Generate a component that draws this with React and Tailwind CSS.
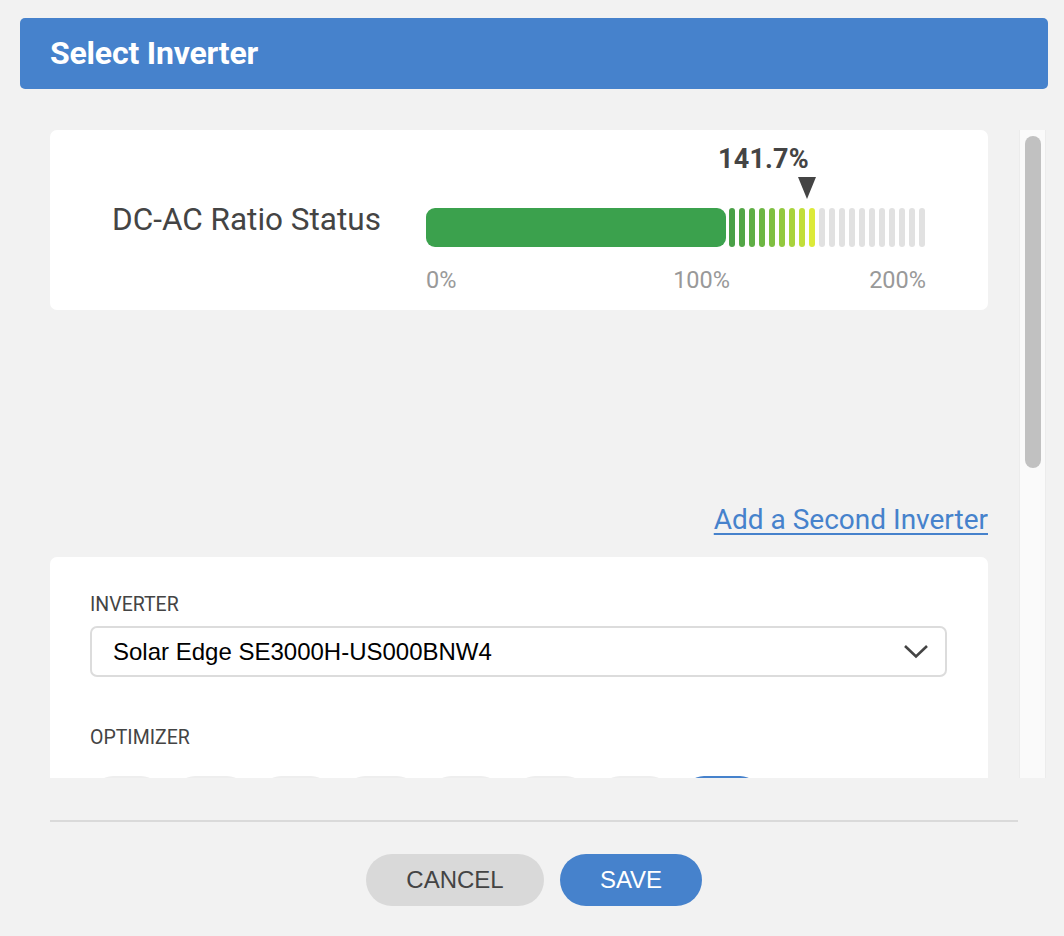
import React from "react";

const segColors = [
  "#49a047",
  "#52a646",
  "#5fae45",
  "#6db643",
  "#7fbf41",
  "#93c93e",
  "#a9d33c",
  "#c2de3a",
  "#dcea38",
];

const RatioBar = () => {
  const segments = [];
  for (let i = 0; i < 20; i++) {
    segments.push(
      <div
        key={i}
        className="w-[6px] h-full rounded-full"
        style={{ backgroundColor: i < segColors.length ? segColors[i] : "#e1e1e1" }}
      />
    );
  }
  return (
    <div className="w-[500px] pt-[13px]">
      <div className="ml-[292px] w-[100px] text-[27px] leading-[32px] font-bold text-[#444] tracking-[0.2px]">
        141.7%
      </div>
      <div className="ml-[372px] mt-[2px] w-0 h-0 border-l-[9px] border-r-[9px] border-t-[22px] border-l-transparent border-r-transparent border-t-[#444]" />
      <div className="flex items-stretch h-[39px] mt-[9px]">
        <div className="w-[300px] h-full rounded-[9px] bg-[#3ba14d]" />
        <div className="flex gap-[4px] ml-[3px] h-full">{segments}</div>
      </div>
      <div className="flex mt-[19px] text-[23.5px] leading-[28px] text-[#999]">
        <span className="w-[240px]">0%</span>
        <span className="w-[64px] text-right">100%</span>
        <span className="flex-1 text-right">200%</span>
      </div>
    </div>
  );
};

const optButtons = [68, 72, 70, 72, 70, 71, 70, 76];

export default function App() {
  return (
    <div
      className="w-full h-[936px] bg-[#f2f2f2] overflow-hidden pt-[18px]"
      style={{ fontFamily: "Roboto, 'Liberation Sans', sans-serif" }}
    >
      <div className="ml-[20px] mr-[16px] h-[71px] rounded-[5px] bg-[#4682cc] flex items-center pl-[30px] pb-[2px]">
        <h1 className="text-[32px] font-bold text-white tracking-[-0.2px]">Select Inverter</h1>
      </div>

      <div className="flex mt-[41px] ml-[50px] h-[648px]">
        <div className="w-[938px] h-full overflow-hidden">
          <div className="bg-white rounded-[7px] h-[180px] flex pl-[62px]">
            <div className="w-[314px] pt-[71px] text-[31.5px] leading-[38px] text-[#444]">
              DC-AC Ratio Status
            </div>
            <RatioBar />
          </div>

          <div className="flex justify-end mt-[193px] h-[54px]">
            <a href="#" className="text-[28px] leading-[34px] text-[#4682cc] underline underline-offset-[4px] decoration-[1.5px]">
              Add a Second Inverter
            </a>
          </div>

          <div className="bg-white rounded-[7px] px-[40px] pt-[36px] pb-[40px]">
            <div className="text-[19.5px] leading-[24px] text-[#444]">INVERTER</div>
            <div className="mt-[9px] w-[857px] h-[51px] border-2 border-[#dcdcdc] rounded-[7px] flex items-center justify-between pl-[21px] pr-[16px]">
              <span
                className="text-[24px] text-black"
                style={{ fontFamily: "'Liberation Sans', Arial, sans-serif" }}
              >
                Solar Edge SE3000H-US000BNW4
              </span>
              <svg width="26" height="15" viewBox="0 0 26 15">
                <polyline points="2,2 13,12.5 24,2" fill="none" stroke="#444" strokeWidth="2.6" />
              </svg>
            </div>
            <div className="mt-[49px] text-[19.5px] leading-[24px] text-[#444]">OPTIMIZER</div>
            <div className="flex gap-[14px] mt-[26px] ml-[3px]">
              {optButtons.map((w, i) => (
                <div
                  key={i}
                  className={i === 7 ? "h-[40px] rounded-full bg-[#4682cc]" : "h-[40px] rounded-full bg-[#eeeeee]"}
                  style={{ width: w }}
                />
              ))}
            </div>
          </div>
        </div>

        <div className="ml-[31px] w-[27px] h-full bg-[#fafafa] border-l border-r border-[#ececec] pt-[6px] flex justify-center">
          <div className="w-[16px] h-[332px] rounded-full bg-[#c1c1c1]" />
        </div>
      </div>

      <div className="ml-[50px] w-[968px] mt-[42px] h-[2px] bg-[#dadada]" />

      <div
        className="flex justify-center gap-[16px] mt-[32px] pl-[4px]"
        style={{ fontFamily: "'Liberation Sans', Arial, sans-serif" }}
      >
        <button className="w-[178px] h-[52px] rounded-full bg-[#d9d9d9] text-[24px] text-[#444]">
          CANCEL
        </button>
        <button className="w-[142px] h-[52px] rounded-full bg-[#4682cc] text-[24px] text-white">
          SAVE
        </button>
      </div>
    </div>
  );
}
